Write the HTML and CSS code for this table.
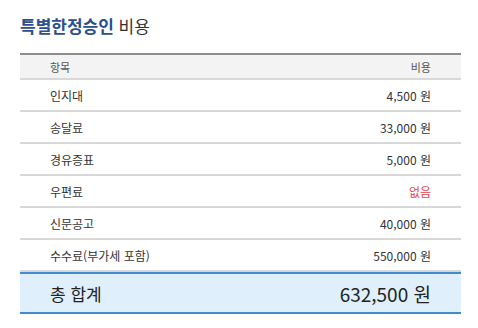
FILE: index.html
```html
<!DOCTYPE html>
<html lang="ko">
<head>
<meta charset="utf-8">
<link rel="stylesheet" href="styles.css">
</head>
<body>
<div class="wrap">
  <h2 class="title"><span class="accent">특별한정승인</span> 비용</h2>
  <div class="table">
    <div class="row head"><span>항목</span><span>비용</span></div>
    <div class="row"><span>인지대</span><span>4,500 원</span></div>
    <div class="row"><span>송달료</span><span>33,000 원</span></div>
    <div class="row"><span>경유증표</span><span>5,000 원</span></div>
    <div class="row"><span>우편료</span><span class="none">없음</span></div>
    <div class="row"><span>신문공고</span><span>40,000 원</span></div>
    <div class="row"><span>수수료(부가세 포함)</span><span>550,000 원</span></div>
    <div class="row total"><span>총 합계</span><span class="sum">632,500 원</span></div>
  </div>
</div>
</body>
</html>
```
FILE: styles.css
```css
* { box-sizing: border-box; }
body {
  margin: 0;
  background: #fff;
  font-family: "Noto Sans CJK KR", "Noto Sans", sans-serif;
  color: #333;
}
.wrap {
  padding: 14px 17px 0 20px;
}
.title {
  margin: 0 0 15px 0;
  font-size: 17px;
  line-height: 24px;
  font-weight: 400;
  color: #333;
}
.accent {
  color: #2c4f8e;
  font-weight: 700;
}
.table {
  width: 441px;
  display: flex;
  flex-direction: column;
}
.row {
  display: flex;
  justify-content: space-between;
  align-items: center;
  height: 32px;
  padding: 0 30px;
  border-bottom: 2px solid #d8d8d8;
  font-size: 12px;
  color: #333;
}
.row.head {
  height: 27px;
  background: #f3f3f3;
  border-top: 2px solid #8c8c8c;
  font-size: 11px;
  color: #555;
}
.none { color: #e0474c; }
.row.total {
  height: 42px;
  background: #dff0fc;
  border-top: 2px solid #3f8bcd;
  border-bottom: 2px solid #3f8bcd;
  font-size: 17px;
  font-weight: 400;
  color: #222;
}
.sum { font-size: 19px; }
```
